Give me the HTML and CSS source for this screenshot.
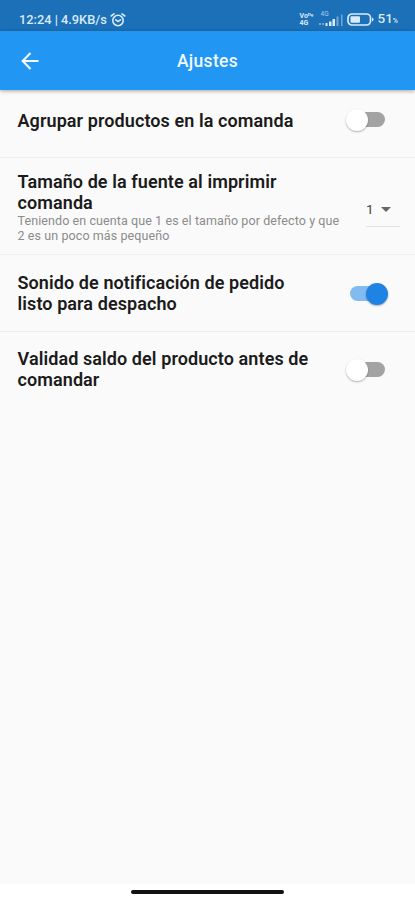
FILE: index.html
```html
<!DOCTYPE html>
<html lang="es">
<head>
<meta charset="utf-8">
<title>Ajustes</title>
<link rel="stylesheet" href="styles.css">
</head>
<body>
<div class="status">
  <span class="status-text">12:24 | 4.9KB/s</span>
  <svg class="alarm" width="16" height="16" viewBox="0 0 16 16" fill="none" stroke="currentColor" stroke-width="1.6" stroke-linecap="round"><circle cx="8" cy="8.500" r="5.200"/><path d="M1.200 4 4 1.800M14.800 4 12 1.800M5.800 7.800 8 9.500l2.500-1.700"/></svg>
  <div class="status-right">
    <span class="volte"><span>Voⁿᵉ</span><span>4G</span></span>
    <span class="signal"><span class="net">4G</span>
      <svg width="26" height="14" viewBox="0 0 26 14" fill="currentColor"><path opacity=".45" d="M1 10h2v2H1zM4 10h2v2H4z"/><path d="M7.500 10h2v3h-2zM11 8.500h2.500V13H11zM14.500 6h2.500v7h-2.500z"/><path opacity=".45" d="M18.500 3.500h2V13h-2zM23 1.500h1.500V13H23z"/></svg>
    </span>
    <svg class="battery" width="27" height="13" viewBox="0 0 27 13"><rect x="1" y="1" width="22.500" height="11" rx="4" fill="none" stroke="currentColor" stroke-width="1.700"/><rect x="3.500" y="3.300" width="9.500" height="6.400" rx="1" fill="currentColor"/><path d="M25 4.500q1.500.5 1.500 2T25 8.500z" fill="currentColor"/></svg>
    <span class="percent">51<small>%</small></span>
  </div>
</div>
<header class="bar">
  <svg class="back" width="20" height="20" viewBox="0 0 20 20" fill="none" stroke="currentColor" stroke-width="2.100"><path d="M18.500 10H3M10.500 2 2.700 10l7.800 8"/></svg>
  <h1>Ajustes</h1>
</header>
<main>
  <section class="row row-group">
    <div class="copy"><h2>Agrupar productos en la comanda</h2></div>
    <span class="switch"></span>
  </section>
  <section class="row row-font">
    <div class="copy">
      <h2>Tamaño de la fuente al imprimir<br>comanda</h2>
      <p>Teniendo en cuenta que 1 es el tamaño por defecto y que<br>2 es un poco más pequeño</p>
    </div>
    <div class="select"><span>1</span><i></i></div>
  </section>
  <section class="row row-sound">
    <div class="copy"><h2>Sonido de notificación de pedido<br>listo para despacho</h2></div>
    <span class="switch on"></span>
  </section>
  <section class="row row-balance">
    <div class="copy"><h2>Validad saldo del producto antes de<br>comandar</h2></div>
    <span class="switch"></span>
  </section>
</main>
<footer><div class="home"></div></footer>
</body>
</html>
```
FILE: styles.css
```css
* { box-sizing: border-box; }
body {
  margin: 0;
  height: 900px;
  display: flex;
  flex-direction: column;
  overflow: hidden;
  background: #fafafa;
  color: #1b1b1b;
  font-family: Roboto, "Liberation Sans", sans-serif;
}
.status {
  height: 31px;
  flex: none;
  display: flex;
  align-items: center;
  padding: 8px 17px 0 19px;
  background: #1c70b7;
  color: #d9eaf8;
}
.status-text { font-size: 12.8px; font-weight: 500; line-height: 16px; white-space: nowrap; }
.alarm { margin-left: 3px; }
.status-right { margin-left: auto; display: flex; align-items: center; }
.volte { display: flex; flex-direction: column; width: 15px; font-size: 7px; line-height: 7px; font-weight: 700; margin-right: 4px; white-space: nowrap; }
.signal { position: relative; display: flex; margin-right: 3px; }
.net { position: absolute; left: 2px; top: -2px; font-size: 6.5px; line-height: 7px; opacity: .75; }
.battery { margin-right: 3px; }
.percent { font-size: 13.5px; font-weight: 500; line-height: 16px; }
.percent small { font-size: 7px; }
.bar {
  height: 59px;
  flex: none;
  display: grid;
  grid-template-columns: 20px 1fr 20px;
  align-items: center;
  padding: 1px 20px 0;
  background: #2196f3;
  color: #f2f9ff;
  box-shadow: 0 1px 4px rgba(0, 0, 0, .35);
  z-index: 1;
}
h1 { margin: 0; text-align: center; font-size: 17.5px; line-height: 22px; font-weight: 500; letter-spacing: .3px; }
main { flex: 1; }
.row { display: flex; justify-content: space-between; padding-left: 17.5px; }
.row-group { height: 68px; padding-top: 20px; border-bottom: 1px solid #eee; }
.row-font { height: 97px; padding-top: 13px; border-bottom: 1px solid #f1f1f1; }
.row-sound { height: 77px; padding-top: 17px; border-bottom: 1px solid #eee; }
.row-balance { padding-top: 16px; }
.copy { white-space: nowrap; }
h2 { margin: 0; font-size: 18px; line-height: 21px; font-weight: 600; letter-spacing: .09px; }
p { margin: 0; font-size: 12.5px; line-height: 15px; color: #8b8b8b; letter-spacing: .09px; }
.switch {
  position: relative;
  flex: none;
  width: 35px;
  height: 15px;
  margin: 2px 30px 0 0;
  border-radius: 8px;
  background: #a3a3a3;
}
.switch::before {
  content: "";
  position: absolute;
  left: -4px;
  top: -3px;
  width: 22px;
  height: 22px;
  border-radius: 50%;
  background: #fff;
  box-shadow: 0 1px 2px rgba(0, 0, 0, .3);
}
.row-sound .switch { margin-top: 14px; }
.row-balance .switch { margin-top: 14px; }
.switch.on { background: #83baf0; }
.switch.on::before { left: 16px; background: #1e83e2; }
.select {
  width: 34px;
  height: 33px;
  margin: 23px 15px 0 0;
  padding: 0 9px 2px 0;
  display: flex;
  justify-content: space-between;
  align-items: center;
  border-bottom: 1px solid #e2e2e2;
  font-size: 13.5px;
  color: #444;
}
.select i { border: 5px solid transparent; border-top-color: #666; border-bottom: 0; }
footer { height: 16px; flex: none; background: #fff; padding-top: 6px; }
.home { width: 153px; height: 4px; margin-left: 131px; border-radius: 2px; background: #111; }
```
